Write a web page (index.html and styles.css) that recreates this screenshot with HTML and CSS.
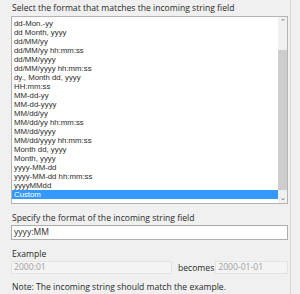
FILE: index.html
```html
<!DOCTYPE html>
<html lang="en">
  <head>
    <meta charset="UTF-8" />
    <title>String Format</title>
    <link rel="stylesheet" href="styles.css">
  </head>
  <body>
    <div class="panel">
      <div class="label first">Select the format that matches the incoming string field</div>

      <div class="listbox">
        <ul class="items">
          <li>dd-Mon.-yy</li>
          <li>dd Month, yyyy</li>
          <li>dd/MM/yy</li>
          <li>dd/MM/yy hh:mm:ss</li>
          <li>dd/MM/yyyy</li>
          <li>dd/MM/yyyy hh:mm:ss</li>
          <li>dy., Month dd, yyyy</li>
          <li>HH:mm:ss</li>
          <li>MM-dd-yy</li>
          <li>MM-dd-yyyy</li>
          <li>MM/dd/yy</li>
          <li>MM/dd/yy hh:mm:ss</li>
          <li>MM/dd/yyyy</li>
          <li>MM/dd/yyyy hh:mm:ss</li>
          <li>Month dd, yyyy</li>
          <li>Month, yyyy</li>
          <li>yyyy-MM-dd</li>
          <li>yyyy-MM-dd hh:mm:ss</li>
          <li>yyyyMMdd</li>
          <li class="selected">Custom</li>
        </ul>
        <div class="scrollbar">
          <div class="arrow up">&#8963;</div>
          <div class="track"><div class="thumb"></div></div>
          <div class="arrow down">&#8964;</div>
        </div>
      </div>

      <div class="label">Specify the format of the incoming string field</div>
      <div class="textbox">yyyy:MM</div>

      <div class="label">Example</div>
      <div class="example-row">
        <div class="textbox disabled wide">2000:01</div>
        <span class="becomes">becomes</span>
        <div class="textbox disabled">2000-01-01</div>
      </div>

      <div class="note">Note: The incoming string should match the example.</div>
    </div>
  </body>
</html>
```

FILE: styles.css
```css
body {
  margin: 0;
  background: #f0f0f0;
  font-family: "Open Sans", "Noto Sans", sans-serif;
  font-size: 8.6px;
  color: #2a2a2a;
}
.panel {
  width: 279px;
  padding: 3px 0 0 11px;
  border-right: 1px solid #d9d9d9;
  height: 291px;
}
.label {
  line-height: 10px;
  margin: 9px 2px 2px 1px;
}
.label.first {
  margin-top: 0;
  margin-bottom: 3px;
}
.listbox {
  display: flex;
  height: 186px;
  margin-right: 2px;
  background: white;
  border: 1px solid #b4b4b4;
}
.items {
  flex: 1;
  list-style: none;
  margin: 0;
  padding: 2px 0 0 0;
  font-family: "Liberation Sans", Arial, sans-serif;
  font-size: 7.8px;
}
.items li {
  height: 9px;
  line-height: 9px;
  padding-left: 2px;
}
.items li.selected {
  background: #3399ff;
  color: white;
}
.scrollbar {
  width: 9px;
  display: flex;
  flex-direction: column;
  background: #f0f0f0;
}
.arrow {
  height: 10px;
  font-size: 7px;
  line-height: 10px;
  text-align: center;
  color: #606060;
}
.track {
  flex: 1;
  display: flex;
  flex-direction: column;
  justify-content: flex-end;
  padding-bottom: 3px;
}
.thumb {
  height: 140px;
  background: #cdcdcd;
}
.textbox {
  height: 13px;
  line-height: 13px;
  margin-right: 2px;
  background: white;
  border: 1px solid #adadad;
  padding-left: 2px;
}
.example-row {
  display: flex;
  align-items: center;
}
.textbox.disabled {
  flex: 1;
  height: 11px;
  line-height: 11px;
  background: #f4f4f4;
  border-color: #e3e3e3;
  color: #a0a0a0;
}
.textbox.wide {
  flex: 0 0 157px;
  margin-right: 0;
}
.becomes {
  padding: 0 1px 0 6px;
}
.note {
  margin-top: 8px;
  margin-left: 1px;
  line-height: 10px;
}
```
